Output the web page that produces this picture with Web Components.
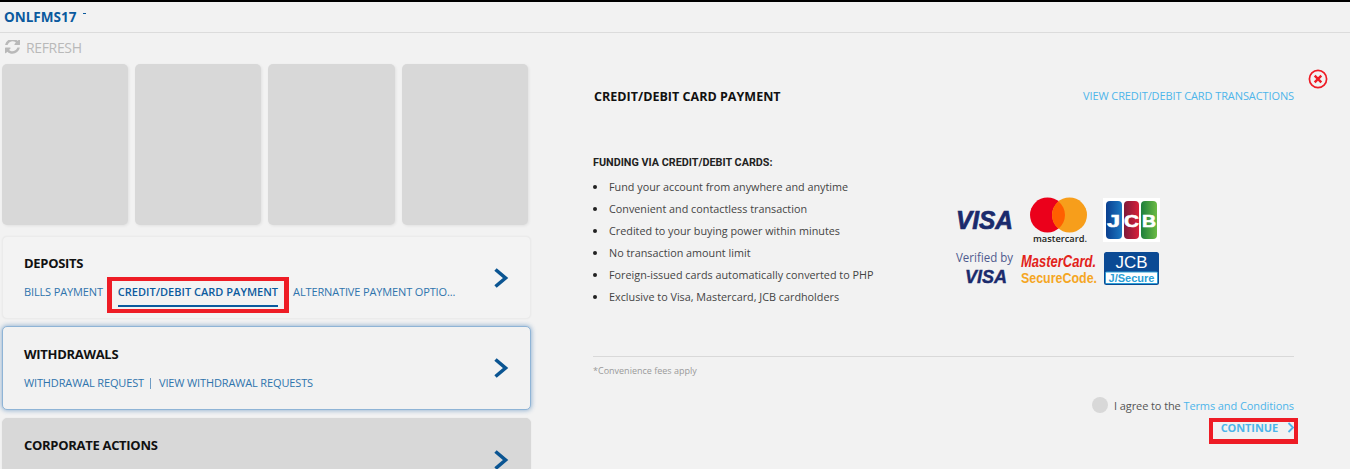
<!DOCTYPE html>
<html lang="en"><head><meta charset="utf-8"><title>Payment</title>
<style>
html,body{margin:0;padding:0;background:#fff;height:472px;overflow:hidden}
body{font-family:"Open Sans",sans-serif}
</style></head><body>
<fund-app>
  <top-bar slot="top">ONLFMS17</top-bar>
  <refresh-bar slot="left"></refresh-bar>
  <tile-row slot="left"></tile-row>
  <action-card slot="left" heading="DEPOSITS" gap="15">
    <a-link>BILLS PAYMENT</a-link>
    <a-link active mark>CREDIT/DEBIT CARD PAYMENT</a-link>
    <a-link>ALTERNATIVE PAYMENT OPTIO...</a-link>
  </action-card>
  <action-card slot="left" heading="WITHDRAWALS" selected>
    <a-link>WITHDRAWAL REQUEST</a-link><a-sep></a-sep><a-link>VIEW WITHDRAWAL REQUESTS</a-link>
  </action-card>
  <action-card slot="left" heading="CORPORATE ACTIONS" disabled></action-card>
  <pay-panel slot="right"></pay-panel>
</fund-app>

<script>
function def(name, css, html){
  customElements.define(name, class extends HTMLElement{
    constructor(){super();const r=this.attachShadow({mode:'open'});
      const h=typeof html==='function'?html(this):html;
      r.innerHTML='<style>'+css+'</style>'+h;}
  });
}
const chev=`<svg width="16" height="22" viewBox="0 0 16 22" aria-hidden="true"><path d="M2.5 2.5 L12.5 11 L2.5 19.5" fill="none" stroke="#0b5592" stroke-width="3.6"/></svg>`;

def('fund-app',`
:host{display:block;width:1350px;height:469px;background:#f2f2f2;border-top:2px solid #000;box-sizing:border-box;overflow:hidden}
.body{display:grid;grid-template-columns:531px 1fr;height:436px}
.left{padding:0 0 0 2px;min-width:0}
.right{min-width:0}
`,`<slot name="top"></slot><div class="body"><div class="left"><slot name="left"></slot></div><div class="right"><slot name="right"></slot></div></div>`);

def('top-bar',`
:host{display:flex;align-items:center;height:30px;box-sizing:content-box;border-bottom:1px solid #dcdcdc;padding-left:4px;font:700 13.5px/20px "Open Sans",sans-serif;color:#0b5a9e}
i{display:block;width:3px;height:1px;background:#0b5a9e;margin:-8px 0 0 7px}
`,`<slot></slot><i></i>`);

def('refresh-bar',`
:host{display:flex;align-items:center;gap:6px;height:29px;padding-bottom:2px;margin-left:3px;font:400 14px/20px "Open Sans",sans-serif;color:#b9b9b9;letter-spacing:-.35px}
svg{display:block}
`,`<svg width="15" height="15" viewBox="0 128 1536 1536" aria-hidden="true"><path d="M1511 928q0 5-1 7-64 268-268 434.5t-478 166.5q-146 0-282.5-55t-243.5-157l-129 129q-19 19-45 19t-45-19-19-45v-448q0-26 19-45t45-19h448q26 0 45 19t19 45-19 45l-137 137q71 66 161 102t187 36q134 0 250-65t186-179q11-17 53-117 8-23 30-23h192q13 0 22.5 9.5t9.5 22.5zm25-800v448q0 26-19 45t-45 19h-448q-26 0-45-19t-19-45 19-45l138-138q-148-137-349-137-134 0-250 65t-186 179q-11 17-53 117-8 23-30 23h-199q-13 0-22.5-9.5t-9.5-22.5v-7q65-268 270-434.5t480-166.5q146 0 284 55.5t245 156.5l130-129q19-19 45-19t45 19 19 45z" fill="#b9b9b9"/></svg><span>REFRESH</span>`);

def('tile-row',`
:host{display:grid;grid-template-columns:126px 126px 127px 126px;gap:7px;margin-bottom:11px;width:526px}
div{height:161px;background:#d8d8d8;border-radius:5px;box-shadow:1px 1px 3px rgba(0,0,0,.07)}
`,`<div></div><div></div><div></div><div></div>`);

def('action-card',`
:host{display:flex;align-items:flex-start;justify-content:space-between;box-sizing:border-box;width:529px;height:83px;margin-bottom:7px;padding:16px 21px 0 21px;background:#f3f3f3;border:1px solid #ebebeb;border-radius:5px;box-shadow:0 0 2px rgba(0,0,0,.05)}
:host([selected]){height:84px;margin-bottom:8px;padding-top:17px;background:#f2f2f2;border-color:#8fb4d6;box-shadow:0 0 4px 1px rgba(60,120,180,.45)}
:host([disabled]){background:#d8d8d8;border-color:#d8d8d8;height:84px}
h3{margin:0;font:700 13px/20px "Open Sans",sans-serif;color:#111;letter-spacing:-.3px}
.links{display:flex;align-items:center;margin-top:9px;height:20px;gap:var(--g,0)}
:host([disabled]) .links{display:none}
svg{display:block;margin-top:14px}
:host([selected]) svg{margin-top:13px}
:host([disabled]) svg{margin-top:14px}
`,(el)=>`<div class="t"><h3>${el.getAttribute('heading')}</h3><div class="links" style="--g:${el.getAttribute('gap')||0}px"><slot></slot></div></div>${chev}`);

def('a-link',`
:host{position:relative;display:inline-block;font:400 11px/20px "Open Sans",sans-serif;color:#2f74ad;white-space:nowrap;letter-spacing:-.14px}
:host([active]){font-weight:600;color:#0b5a9e;letter-spacing:.02px}
:host([active])::after{content:"";position:absolute;left:0;right:0;bottom:-5px;height:2px;background:#0b5a9e}
:host([mark])::before{content:"";position:absolute;left:-11px;right:-11px;top:-5px;bottom:-11px;box-sizing:border-box;border:solid #ee1c25;border-width:4.5px 5px}
`,`<slot></slot>`);

def('a-sep',`
:host{display:inline-block;width:1px;height:11px;background:#6f9cc4;margin:0 8px 0 6px}
`,``);

def('card-logos',`
:host{display:block;width:207px;height:92px}
svg{display:block;overflow:visible}
`,`<svg width="207" height="92" viewBox="0 0 207 92" role="img" aria-label="Accepted cards">
  <defs>
    <linearGradient id="b" x1="0" x2="1"><stop offset="0" stop-color="#0a3f8f"/><stop offset="1" stop-color="#1b78c2"/></linearGradient>
    <linearGradient id="r" x1="0" x2="1"><stop offset="0" stop-color="#7d1a3a"/><stop offset="1" stop-color="#d8213a"/></linearGradient>
    <linearGradient id="g" x1="0" x2="1"><stop offset="0" stop-color="#1e7f3c"/><stop offset="1" stop-color="#6cbb45"/></linearGradient>
  </defs>
  <text x="0" y="32" font-family="'Liberation Sans',sans-serif" font-style="italic" font-weight="700" font-size="25" fill="#1a2a6c" stroke="#1a2a6c" stroke-width=".7" textLength="57" lengthAdjust="spacingAndGlyphs">VISA</text>
  <circle cx="91.5" cy="18" r="17.5" fill="#eb001b"/>
  <circle cx="113.5" cy="18" r="17.5" fill="#f79e1b"/>
  <path d="M102.5 4.4a17.5 17.5 0 0 1 0 27.2a17.5 17.5 0 0 1 0-27.2Z" fill="#ff5f00"/>
  <text x="104" y="45" text-anchor="middle" font-family="'Open Sans',sans-serif" font-weight="600" font-size="9.5" fill="#231f20" textLength="54" lengthAdjust="spacingAndGlyphs">mastercard.</text>
  <rect x="147" y="1" width="57" height="44" fill="#fff"/>
  <rect x="150" y="4" width="16" height="38" rx="4" fill="url(#b)"/>
  <rect x="168" y="4" width="15" height="38" rx="4" fill="url(#r)"/>
  <rect x="185" y="4" width="16" height="38" rx="4" fill="url(#g)"/>
  <g font-family="'Liberation Sans',sans-serif" font-weight="700" font-size="16" fill="#fff" stroke="#fff" stroke-width=".6">
    <text x="151" y="30" textLength="13" lengthAdjust="spacingAndGlyphs">J</text>
    <text x="168" y="30" textLength="15" lengthAdjust="spacingAndGlyphs">C</text>
    <text x="186" y="30" textLength="14" lengthAdjust="spacingAndGlyphs">B</text>
  </g>
  <text x="28.5" y="65" text-anchor="middle" font-family="'Open Sans',sans-serif" font-size="12.5" fill="#4f5a8e" textLength="57" lengthAdjust="spacingAndGlyphs">Verified by</text>
  <text x="9" y="86" font-family="'Liberation Sans',sans-serif" font-style="italic" font-weight="700" font-size="18" fill="#1a2a6c" stroke="#1a2a6c" stroke-width=".4" textLength="42" lengthAdjust="spacingAndGlyphs">VISA</text>
  <text x="65" y="69.5" font-family="'Liberation Sans',sans-serif" font-style="italic" font-weight="700" font-size="17" fill="#e2231a" textLength="75" lengthAdjust="spacingAndGlyphs">MasterCard.</text>
  <text x="65" y="85.5" font-family="'Liberation Sans',sans-serif" font-weight="700" font-size="15.5" fill="#f5a623" textLength="76" lengthAdjust="spacingAndGlyphs">SecureCode.</text>
  <rect x="148" y="55" width="55" height="33" rx="2.5" fill="#0b4a94"/>
  <rect x="149.5" y="75" width="52" height="11.5" rx="1" fill="#fff" stroke="#2c9fd6"/>
  <text x="175.5" y="71" text-anchor="middle" font-family="'Liberation Sans',sans-serif" font-weight="400" font-size="16" fill="#fff" textLength="32" lengthAdjust="spacingAndGlyphs">JCB</text>
  <text x="175.5" y="84.5" text-anchor="middle" font-family="'Liberation Sans',sans-serif" font-weight="700" font-size="10" fill="#2c9fd6" textLength="46" lengthAdjust="spacingAndGlyphs">J/Secure</text>
</svg>`);

def('pay-panel',`
:host{position:relative;display:block;height:100%;box-sizing:border-box;padding:0 56px 0 62px;font-family:"Open Sans",sans-serif}
.close{position:absolute;right:22px;top:36px;display:block}
.head{display:flex;justify-content:space-between;align-items:center;height:20px;padding-top:53px}
h2{margin:0 0 -1px 1px;padding-top:1px;font:700 12.5px/20px "Open Sans",sans-serif;color:#111;letter-spacing:.02px}
.lnk{color:#4db5ea}
.head .lnk{font-size:11px;line-height:20px;letter-spacing:-.1px}
.mid{display:grid;grid-template-columns:363px 1fr;margin-top:47px;height:173px}
h4{margin:0 0 3px;font:700 10.8px/20px Roboto,sans-serif;color:#222;}
ul{margin:0;padding:0;list-style:none}
li{position:relative;height:22px;padding-left:16px;font:400 10.8px/22px "Open Sans",sans-serif;color:#444;white-space:nowrap}
li::before{content:"";position:absolute;left:0;top:9px;width:4px;height:4px;border-radius:50%;background:#222}
.logos{padding-top:44px}
hr{margin:0;border:0;border-top:1px solid #d9d9d9;margin-top:30px}
.note{font:400 9px/14px "Open Sans",sans-serif;color:#9a9a9a;margin-top:7px}
.agree{display:flex;justify-content:flex-end;align-items:center;gap:6px;margin-top:17px;height:20px;font-size:11px;color:#555;letter-spacing:-.1px}
.dot{width:16px;height:16px;border-radius:50%;background:#d8d8d8}
.cont{position:relative;display:flex;justify-content:flex-end;align-items:center;gap:9px;height:18px;margin-top:3px;font-size:11px;font-weight:700;color:#4db5ea;letter-spacing:-.1px;width:701px}
.cont svg{display:block;margin-right:-1px}
.box{position:absolute;right:-4px;top:0;width:89px;height:26px;box-sizing:border-box;border:solid #ee1c25;border-width:4px 4.5px 5px}
`,`
<svg class="close" width="20" height="20" viewBox="0 0 20 20" aria-label="Close"><circle cx="10" cy="10" r="8.6" fill="none" stroke="#ee1c25" stroke-width="1.7"/><path d="M6.7 6.7L13.3 13.3M13.3 6.7L6.7 13.3" stroke="#ee1c25" stroke-width="2.4"/></svg>
<div class="head"><h2>CREDIT/DEBIT CARD PAYMENT</h2><span class="lnk">VIEW CREDIT/DEBIT CARD TRANSACTIONS</span></div>
<div class="mid"><div>
<h4>FUNDING VIA CREDIT/DEBIT CARDS:</h4>
<ul><li>Fund your account from anywhere and anytime</li><li>Convenient and contactless transaction</li><li>Credited to your buying power within minutes</li><li>No transaction amount limit</li><li>Foreign-issued cards automatically converted to PHP</li><li>Exclusive to Visa, Mastercard, JCB cardholders</li></ul>
</div><div class="logos"><card-logos></card-logos></div></div>
<hr>
<div class="note">*Convenience fees apply</div>
<div class="agree"><span class="dot"></span><span>I agree to the <span class="lnk">Terms and Conditions</span></span></div>
<div class="cont"><span>CONTINUE</span><svg width="8" height="11" viewBox="0 0 8 11"><path d="M1.5 1L6 5.5L1.5 10" fill="none" stroke="#4db5ea" stroke-width="1.8"/></svg><span class="box"></span></div>
`);
</script>
</body></html>
